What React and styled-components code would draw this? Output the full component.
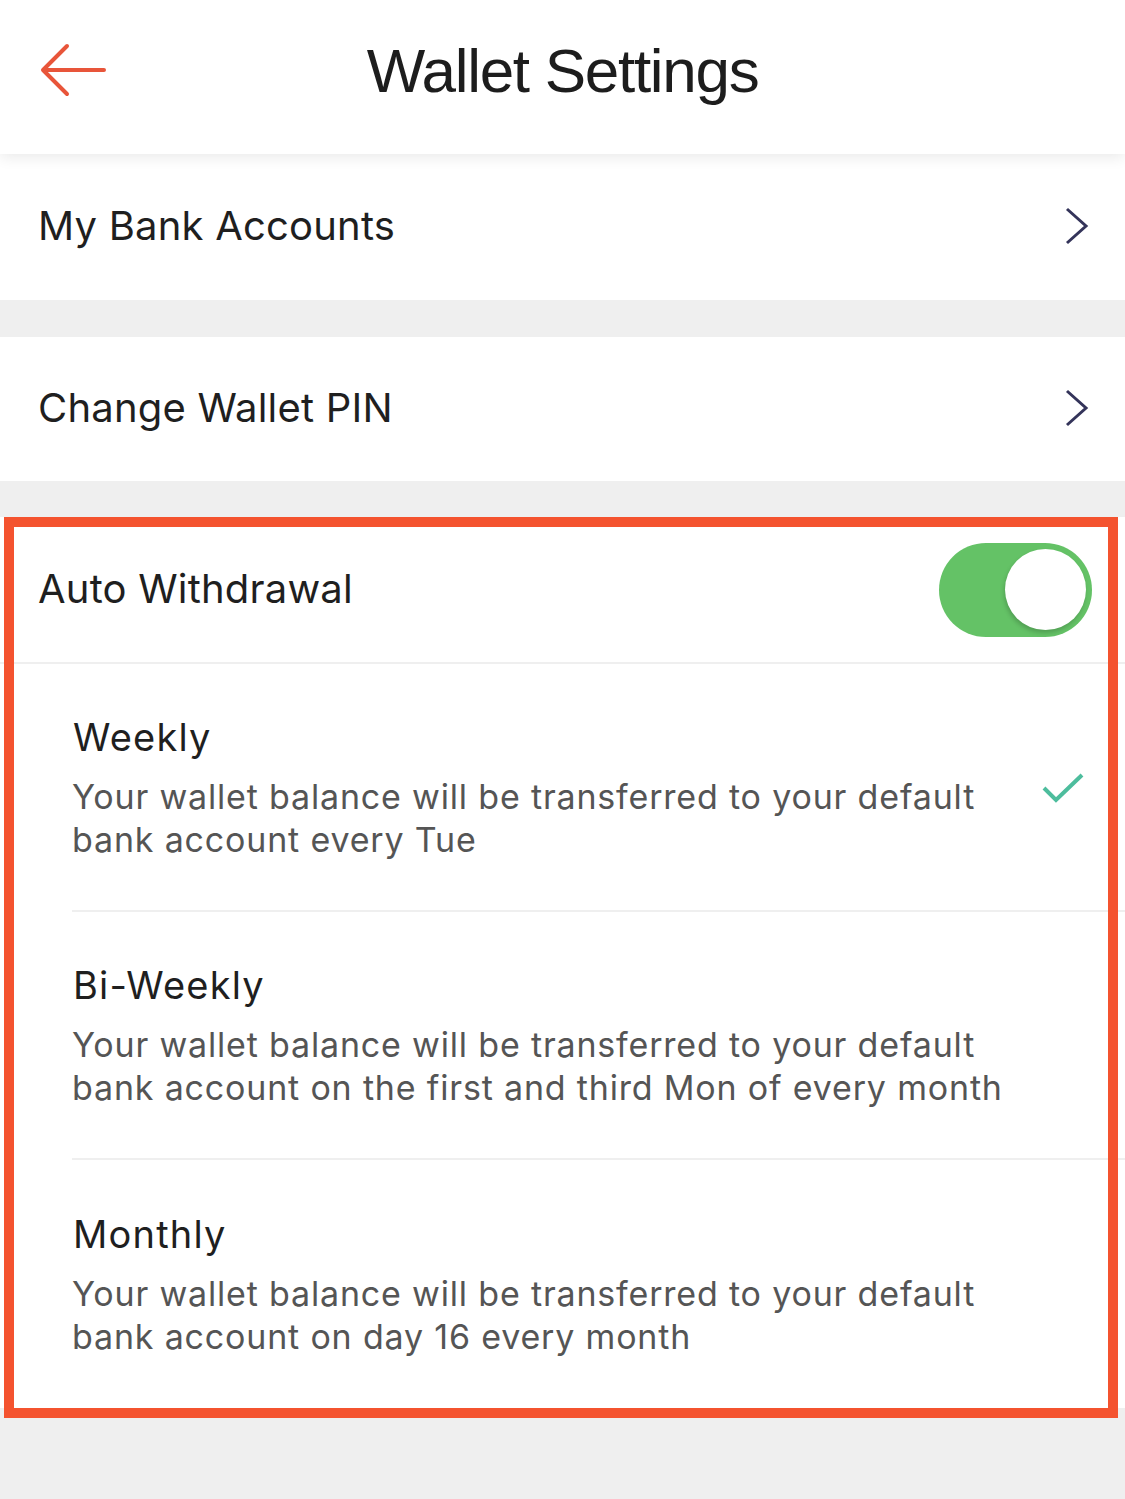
import styled, { createGlobalStyle } from "styled-components";

const GlobalStyle = createGlobalStyle`
  html, body {
    margin: 0;
    padding: 0;
    background: #efefef;
  }
  * {
    box-sizing: border-box;
  }
`;

const Page = styled.div`
  width: 1125px;
  min-height: 1499px;
  background: #efefef;
  font-family: Inter, "Noto Sans", sans-serif;
  color: #222;
`;

const Header = styled.div`
  height: 154px;
  background: #fff;
  display: flex;
  align-items: center;
  justify-content: center;
  position: relative;
  z-index: 1;
  box-shadow: 0 3px 14px rgba(0, 0, 0, 0.09);
`;

const BackButton = styled.div`
  position: absolute;
  left: 40px;
  top: 42px;
  width: 68px;
  height: 56px;
`;

const Title = styled.h1`
  margin: 0 0 14px;
  font-family: "Liberation Sans", Arial, sans-serif;
  font-weight: 400;
  font-size: 62px;
  letter-spacing: -1.3px;
  color: #1d1d1d;
`;

const Group = styled.div`
  background: #fff;
  margin-top: ${(p) => p.$gap}px;
  position: relative;
`;

const Row = styled.div`
  height: ${(p) => p.$h}px;
  display: flex;
  align-items: center;
  justify-content: space-between;
  padding: 0 33px 0 38px;
  border-bottom: ${(p) => (p.$divider ? "2px solid #efefef" : "none")};
`;

const RowLabel = styled.span`
  font-size: 40px;
  color: #1f1f1f;
  letter-spacing: 0.2px;
  margin-top: -3px;
`;

const Chevron = styled.svg`
  width: 24px;
  height: 40px;
  margin-right: 3px;
`;

const Toggle = styled.div`
  width: 153px;
  height: 94px;
  border-radius: 47px;
  background: #64c266;
  display: flex;
  align-items: center;
  justify-content: flex-end;
  padding-right: 6px;
`;

const Knob = styled.div`
  width: 81px;
  height: 81px;
  border-radius: 50%;
  background: #fff;
  box-shadow: -1px 3px 4px rgba(0, 0, 0, 0.18);
`;

const Option = styled.div`
  margin-left: 72px;
  height: 248px;
  display: flex;
  align-items: center;
  border-bottom: ${(p) => (p.$last ? "none" : "2px solid #efefef")};
`;

const OptionText = styled.div`
  width: 960px;
  padding-top: 1px;
`;

const OptionTitle = styled.div`
  font-size: 38px;
  line-height: 46px;
  color: #1f1f1f;
  letter-spacing: 1.2px;
  margin-bottom: 15px;
  margin-left: 1px;
`;

const OptionDesc = styled.div`
  font-size: 34px;
  line-height: 43px;
  color: #555;
  letter-spacing: 0.82px;
`;

const Check = styled.svg`
  width: 42px;
  height: 32px;
  margin-left: 10px;
  margin-top: 2px;
`;

const Highlight = styled.div`
  position: absolute;
  top: 0;
  left: 4px;
  right: 7px;
  bottom: -10px;
  border: 10px solid #f4532f;
  pointer-events: none;
`;

const options = [
  {
    title: "Weekly",
    desc: "Your wallet balance will be transferred to your default bank account every Tue",
    selected: true,
  },
  {
    title: "Bi-Weekly",
    desc: "Your wallet balance will be transferred to your default bank account on the first and third Mon of every month",
  },
  {
    title: "Monthly",
    desc: "Your wallet balance will be transferred to your default bank account on day 16 every month",
  },
];

function ChevronIcon() {
  return (
    <Chevron viewBox="0 0 24 40">
      <path d="M2 2 L21 19 L2 36" fill="none" stroke="#34345a" strokeWidth="3" />
    </Chevron>
  );
}

export default function App() {
  return (
    <Page>
      <GlobalStyle />
      <Header>
        <BackButton>
          <svg width="68" height="56" viewBox="0 0 68 56">
            <path
              d="M64 28 H4 M27 4 L3 28 L27 52"
              fill="none"
              stroke="#e8553a"
              strokeWidth="4"
              strokeLinecap="round"
              strokeLinejoin="round"
            />
          </svg>
        </BackButton>
        <Title>Wallet Settings</Title>
      </Header>

      <Group $gap={0}>
        <Row $h={146}>
          <RowLabel>My Bank Accounts</RowLabel>
          <ChevronIcon />
        </Row>
      </Group>

      <Group $gap={37}>
        <Row $h={144}>
          <RowLabel>Change Wallet PIN</RowLabel>
          <ChevronIcon />
        </Row>
      </Group>

      <Group $gap={36}>
        <Row $h={147} $divider>
          <RowLabel>Auto Withdrawal</RowLabel>
          <Toggle>
            <Knob />
          </Toggle>
        </Row>
        {options.map((o, i) => (
          <Option key={o.title} $last={i === options.length - 1}>
            <OptionText>
              <OptionTitle>{o.title}</OptionTitle>
              <OptionDesc>{o.desc}</OptionDesc>
            </OptionText>
            {o.selected && (
              <Check viewBox="0 0 42 32">
                <path
                  d="M2 16 L14 28 L40 3"
                  fill="none"
                  stroke="#4dbd9d"
                  strokeWidth="4"
                />
              </Check>
            )}
          </Option>
        ))}
        <Highlight />
      </Group>
    </Page>
  );
}
